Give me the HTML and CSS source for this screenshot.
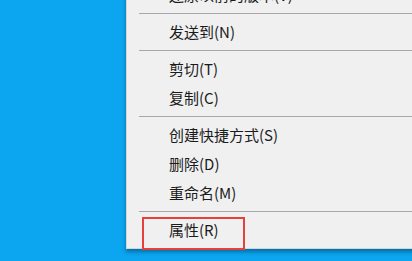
FILE: index.html
```html
<!DOCTYPE html>
<html lang="zh-CN">
<head>
<meta charset="utf-8">
<link rel="stylesheet" href="styles.css">
</head>
<body>
<div class="menu">
  <div class="item">还原以前的版本(V)</div>
  <div class="sep"></div>
  <div class="item">发送到(N)</div>
  <div class="sep"></div>
  <div class="item">剪切(T)</div>
  <div class="item">复制(C)</div>
  <div class="sep"></div>
  <div class="item">创建快捷方式(S)</div>
  <div class="item">删除(D)</div>
  <div class="item">重命名(M)</div>
  <div class="sep"></div>
  <div class="item item-last">属性(R)<span class="highlight"></span></div>
</div>
</body>
</html>
```
FILE: styles.css
```css
html, body {
  margin: 0;
  padding: 0;
  width: 412px;
  height: 261px;
  overflow: hidden;
  background: #0ba6ef;
}
.menu {
  margin-top: -24px;
  margin-left: 126px;
  margin-right: -20px;
  padding: 3px 0 4px 0;
  background: #f0f0f0;
  border: 1px solid #d6d6d6;
  box-shadow: 0 3px 4px rgba(0, 40, 80, 0.45);
  font-family: "Noto Sans CJK SC", "Noto Sans", sans-serif;
  font-size: 15px;
  color: #1b1b1b;
}
.item {
  height: 29px;
  line-height: 29px;
  padding-left: 42px;
  white-space: nowrap;
}
.item-last {
  position: relative;
}
.sep {
  height: 1px;
  margin: 4px 0 3px 12px;
  background: #a8a8a8;
}
.highlight {
  position: absolute;
  left: 15px;
  top: 2px;
  width: 103px;
  height: 33px;
  box-sizing: border-box;
  border: 2.5px solid #e8413c;
}
```
